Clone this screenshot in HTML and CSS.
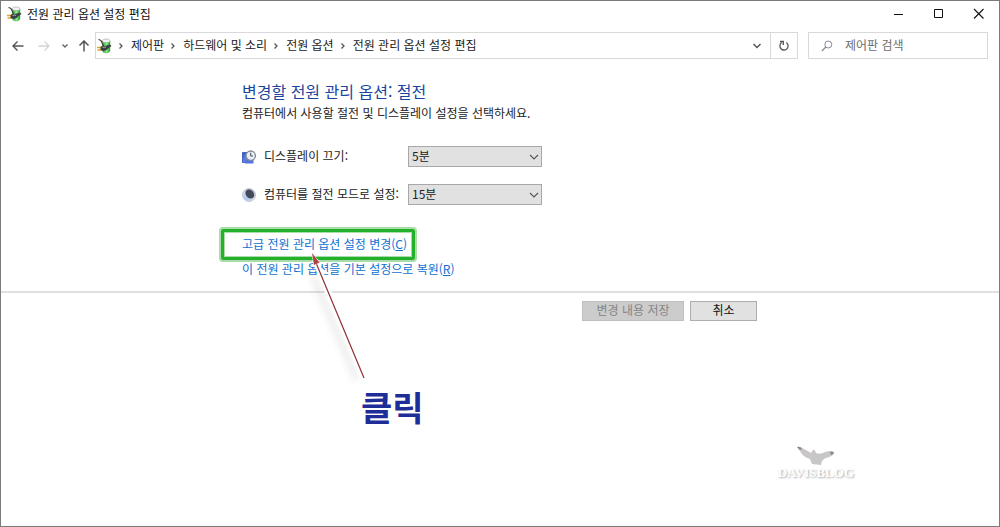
FILE: index.html
```html
<!DOCTYPE html>
<html lang="ko">
<head>
<meta charset="utf-8">
<title>전원 관리 옵션 설정 편집</title>
<link rel="stylesheet" href="styles.css">
</head>
<body>
<svg class="defs" width="0" height="0" aria-hidden="true">
  <defs>
    <linearGradient id="cell" x1="0" x2="1"><stop offset="0" stop-color="#2fa034"/><stop offset=".55" stop-color="#8bf08a"/><stop offset="1" stop-color="#1d9a27"/></linearGradient>
    <linearGradient id="screen" x1="0" y1="0" x2="1" y2="1"><stop offset="0" stop-color="#2b4fd0"/><stop offset="1" stop-color="#8fb0ff"/></linearGradient>
    <radialGradient id="moon" cx=".3" cy=".75" r=".8"><stop offset="0" stop-color="#a9c6f4"/><stop offset=".6" stop-color="#cfd8e6"/><stop offset="1" stop-color="#b4b8bd"/></radialGradient>
    <filter id="soft" x="-50%" y="-50%" width="200%" height="200%"><feGaussianBlur stdDeviation="3"/></filter>
    <symbol id="power" viewBox="0 0 16 16">
      <path d="M5.500 3V13Q6 15 9 15T13 13V3Z" fill="url(#cell)" stroke="#3c8a40" stroke-width=".4"/>
      <path d="M5.300 4V2.500Q6 1 9 1T13 2.500V4Q9 5.300 5.300 4Z" fill="#f1f4f2" stroke="#839087" stroke-width=".5"/>
      <path d="M1.500 1.500Q4.500 2 5 4.500T7 8" fill="none" stroke="#333" stroke-width="1.200"/>
      <path d="M0 9.500h4M.5 12h4" stroke="#e3a51e" stroke-width="1.500"/>
      <path d="M3.500 9Q5.500 7 8 8L13 6.500L14.500 8L11.500 10Q9.500 13 6 13L3.500 12Z" fill="#3c4144"/>
      <path d="M5.500 9.500Q7.500 8.500 9 9.500" fill="none" stroke="#a9aeb1" stroke-width="1"/>
    </symbol>
    <symbol id="chevron" viewBox="0 0 8 10"><path d="M2.500 2.500L5 5L2.500 7.500" fill="none" stroke="#555" stroke-width="1.300"/></symbol>
  </defs>
</svg>
<div class="window">
  <header class="titlebar">
    <svg class="icon16" aria-hidden="true"><use href="#power"/></svg>
    <span class="title">전원 관리 옵션 설정 편집</span>
    <button class="winbtn" aria-label="최소화"><svg width="12" height="12"><path d="M1 6.500h9" stroke="#111" stroke-width="1"/></svg></button>
    <button class="winbtn" aria-label="최대화"><svg width="12" height="12"><path d="M1.500 1.500h8v8h-8z" fill="none" stroke="#111" stroke-width="1"/></svg></button>
    <button class="winbtn" aria-label="닫기"><svg width="12" height="12"><path d="M1 1L10.500 10.500M10.500 1L1 10.500" stroke="#111" stroke-width="1.100"/></svg></button>
  </header>
  <nav class="navbar">
    <div class="history">
      <button class="navbtn" aria-label="뒤로"><svg width="12" height="12"><path d="M11.500 6H1M5.500 1.500L1 6L5.500 10.500" fill="none" stroke="#555" stroke-width="1.400"/></svg></button>
      <button class="navbtn" aria-label="앞으로"><svg width="12" height="12"><path d="M.5 6H11M6.500 1.500L11 6L6.500 10.500" fill="none" stroke="#d4d4d4" stroke-width="1.300"/></svg></button>
      <button class="navbtn small" aria-label="최근 위치"><svg width="8" height="8"><path d="M1.500 2.500L4 5L6.500 2.500" fill="none" stroke="#666" stroke-width="1.400"/></svg></button>
      <button class="navbtn up" aria-label="위로"><svg width="12" height="12"><path d="M6 11.500V1M1.500 5.500L6 1L10.500 5.500" fill="none" stroke="#555" stroke-width="1.500"/></svg></button>
    </div>
    <div class="address">
      <svg class="icon16" aria-hidden="true"><use href="#power"/></svg>
      <svg class="sep" aria-hidden="true"><use href="#chevron"/></svg><a href="#">제어판</a>
      <svg class="sep" aria-hidden="true"><use href="#chevron"/></svg><a href="#">하드웨어 및 소리</a>
      <svg class="sep" aria-hidden="true"><use href="#chevron"/></svg><a href="#">전원 옵션</a>
      <svg class="sep" aria-hidden="true"><use href="#chevron"/></svg><a href="#">전원 관리 옵션 설정 편집</a>
      <button class="drop" aria-label="이전 위치"><svg width="10" height="8"><path d="M1.500 2L5 5.500L8.500 2" fill="none" stroke="#555" stroke-width="1.500"/></svg></button>
      <button class="refresh" aria-label="새로 고침"><svg width="12" height="12"><path d="M8.300 2.500A4.100 4.100 0 1 1 3.600 2.600M2 1.500H5.300V5" fill="none" stroke="#555" stroke-width="1.300"/></svg></button>
    </div>
    <div class="search">
      <svg width="12" height="12" aria-hidden="true"><circle cx="7.300" cy="4.500" r="3.500" fill="none" stroke="#8d8798"/><path d="M4.800 7L.8 11" stroke="#8d8798" stroke-width="1.200"/></svg>
      <input type="text" placeholder="제어판 검색" aria-label="제어판 검색">
    </div>
  </nav>
  <main class="content">
    <h1>변경할 전원 관리 옵션: 절전</h1>
    <p class="intro">컴퓨터에서 사용할 절전 및 디스플레이 설정을 선택하세요.</p>
    <div class="settings">
      <svg class="icon14" viewBox="0 0 14 14" aria-hidden="true"><path d="M.5 2.500H7V12.500H.5Z" fill="url(#screen)" stroke="#4563b8"/><path d="M3 9.500H11.500V13.500H3Z" fill="#5474e3"/><circle cx="8.700" cy="5.700" r="4.700" fill="#e9eff5" stroke="#808994" stroke-width="1.300"/><path d="M8.700 2.700V6H11" fill="none" stroke="#40505f"/></svg>
      <label for="display">디스플레이 끄기:</label>
      <span class="choice"><select id="display"><option>5분</option></select><svg width="10" height="8"><path d="M1 2L5 6L9 2" fill="none" stroke="#555" stroke-width="1.100"/></svg></span>
      <svg class="icon14" viewBox="0 0 14 14" aria-hidden="true"><circle cx="7" cy="7" r="6.500" fill="url(#moon)" stroke="#c4cad3"/><ellipse cx="7.800" cy="6" rx="5" ry="3.900" transform="rotate(50 7.800 6)" fill="#42495a"/></svg>
      <label for="sleep">컴퓨터를 절전 모드로 설정:</label>
      <span class="choice"><select id="sleep"><option>15분</option></select><svg width="10" height="8"><path d="M1 2L5 6L9 2" fill="none" stroke="#555" stroke-width="1.100"/></svg></span>
    </div>
    <div class="links">
      <span class="marked"><a href="#">고급 전원 관리 옵션 설정 변경(<u>C</u>)</a></span>
      <a href="#">이 전원 관리 옵션을 기본 설정으로 복원(<u>R</u>)</a>
    </div>
    <div class="callout">
      <svg width="64" height="132" viewBox="0 0 64 132" aria-hidden="true">
        <path d="M6 24L50 128" stroke="#777" stroke-opacity=".12" stroke-width="7" filter="url(#soft)"/>
        <path d="M8 8L57 126" stroke="#fff" stroke-width="6"/>
        <path d="M7 6L57 126" stroke="#8e2f36" stroke-width="1.200"/>
        <path d="M5 1L12.500 10.500L7 13Z" fill="#b43f43" stroke="#fff" stroke-width="1" paint-order="stroke"/>
      </svg>
      <strong>클릭</strong>
    </div>
  </main>
  <footer class="actions">
    <button class="action save" disabled>변경 내용 저장</button>
    <button class="action cancel">취소</button>
  </footer>
  <div class="watermark">
    <svg width="40" height="20" viewBox="0 0 40 20" aria-hidden="true"><path d="M1 1Q4 0 8 3Q12 5 15 7L17 4Q19 3 20 7Q24 9 29 6Q35 4 38 6Q39 9 33 11Q28 12 26 15L25 19L16 18L14 13Q8 11 6 8Z" fill="#c9c6c6"/><path d="M1 1Q4 0 6 3L4 4ZM34 6Q37 5 38 7L35 9Z" fill="#888"/></svg>
    <span>DAVISBLOG</span>
  </div>
</div>
</body>
</html>
```
FILE: styles.css
```css
* { box-sizing: border-box; }
body {
  margin: 0;
  background: #fff;
  color: #222;
  font: 12px/18px "Noto Sans CJK KR", sans-serif;
}
.defs { position: absolute; }
button, input, select { font: inherit; color: inherit; margin: 0; padding: 0; }
button { border: 0; background: none; }
a { color: inherit; text-decoration: none; }
svg { flex: none; display: block; }

.window {
  position: relative;
  min-height: 100vh;
  border: 1px solid #7b7b7b;
}
.titlebar { display: flex; align-items: center; height: 25px; padding-left: 6px; }
.title { flex: 1; padding-left: 4px; color: #111; }
.icon16 { width: 16px; height: 16px; }
.winbtn { display: grid; place-items: center; width: 40px; height: 25px; }

.navbar { display: flex; padding: 6px 11px 0 10px; }
.history { display: flex; align-items: center; width: 84px; }
.navbtn { display: grid; place-items: center; width: 14px; height: 26px; margin-right: 12px; }
.navbtn.small { width: 8px; margin-right: 8px; margin-left: -2px; }
.navbtn.up { margin-right: 0; }
.address {
  flex: 1;
  display: flex;
  align-items: center;
  height: 27px;
  padding-left: 1px;
  border: 1px solid #d9d9d9;
}
.address a { line-height: 16px; padding-bottom: 2px; }
.sep { width: 8px; height: 10px; margin: 0 6px 0 4px; }
.address a + .sep { margin-left: 5px; }
.drop { display: grid; place-items: center; width: 26px; height: 25px; margin-left: auto; }
.refresh { display: grid; place-items: center; width: 27px; height: 25px; border-left: 1px solid #d9d9d9; }
.search {
  display: flex;
  align-items: center;
  gap: 12px;
  width: 180px;
  height: 27px;
  margin-left: 10px;
  padding: 0 12px;
  border: 1px solid #d9d9d9;
}
.search input { flex: 1; min-width: 0; border: 0; padding-bottom: 2px; outline: 0; background: none; }
.search input::placeholder { color: #6d6d6d; opacity: 1; }

.content { position: relative; padding: 20px 20px 13px 241px; border-bottom: 2px solid #dfdfdf; }
h1 { margin: 0; color: #1a459f; font-size: 16px; line-height: 25px; font-weight: 400; }
.intro { margin: 0; }
.settings {
  display: grid;
  grid-template-columns: 14px 136px 134px;
  gap: 17px 8px;
  align-items: center;
  margin-top: 24px;
}
.icon14 { width: 14px; height: 14px; }
.settings label { white-space: nowrap; padding-bottom: 2px; }
.choice { display: grid; align-items: center; }
.choice select, .choice svg { grid-area: 1 / 1; }
.choice svg { justify-self: end; margin-right: 3px; pointer-events: none; }
.choice select {
  appearance: none;
  width: 100%;
  height: 21px;
  padding: 0 0 2px 3px;
  border: 1px solid #a8a8a8;
  border-radius: 0;
  background: #e1e1e1;
}
.links { display: flex; flex-direction: column; align-items: flex-start; margin-top: 24px; color: #0f70d0; }
.marked {
  margin-left: -21px;
  padding: 3px 5px 4px 18px;
  border: 3px solid #25b02c;
  border-radius: 2px;
  box-shadow: 0 0 0 2px #a8dda9, inset 0 0 0 1px #a8dda9;
}
.callout { position: absolute; left: 306px; top: 193px; pointer-events: none; }
.callout strong {
  display: block;
  margin-left: 54px;
  color: #1f2d98;
  font-size: 34px;
  line-height: 46px;
  font-weight: 700;
}
.actions { display: flex; gap: 6px; justify-content: flex-end; padding: 8px 242px 0 20px; }
.action { height: 20px; border: 1px solid #adadad; background: #e1e1e1; line-height: 16px; padding-bottom: 2px; }
.save { width: 102px; border-color: #bfbfbf; background: #ccc; color: #858585; }
.cancel { width: 67px; color: #111; }
.watermark {
  position: absolute;
  right: 145px;
  bottom: 46px;
  display: flex;
  flex-direction: column;
  align-items: center;
  color: #fff;
  font: 700 13px/14px "Liberation Serif", serif;
  text-shadow: 1px 1px 2px #aaa;
}
```
